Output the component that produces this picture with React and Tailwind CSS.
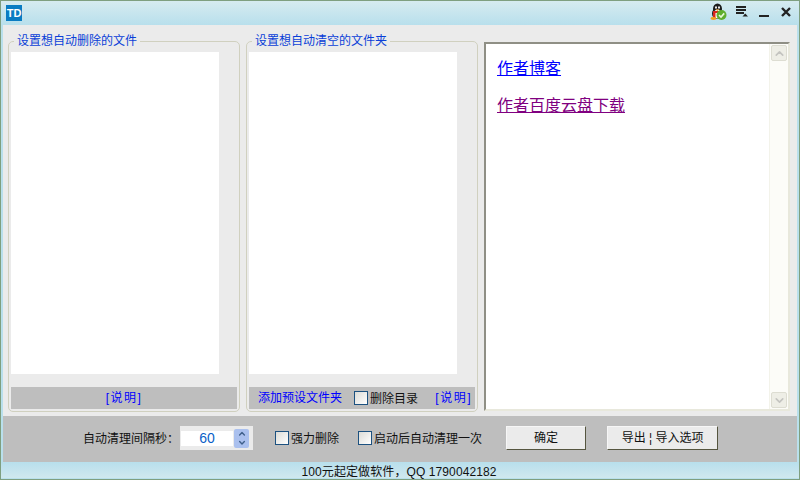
import { ChevronUp, ChevronDown } from 'lucide-react';

const font = { fontFamily: '"Liberation Sans", "Noto Sans CJK SC", sans-serif' };

function Penguin() {
  return (
    <svg width="17" height="17" viewBox="0 0 17 17">
      <ellipse cx="7.5" cy="6" rx="4.5" ry="5.5" fill="#1c1c1c" />
      <ellipse cx="7.5" cy="10.5" rx="5.5" ry="5.5" fill="#1c1c1c" />
      <ellipse cx="7.5" cy="11" rx="3.8" ry="4.6" fill="#fff" />
      <ellipse cx="6" cy="4.5" rx="0.9" ry="1.3" fill="#fff" />
      <ellipse cx="9" cy="4.5" rx="0.9" ry="1.3" fill="#fff" />
      <path d="M5.5 6.5h4L7.5 8z" fill="#f0a020" />
      <rect x="3" y="8" width="9" height="2" fill="#d8261c" />
      <rect x="3" y="10" width="2.5" height="5" fill="#d8261c" />
      <ellipse cx="3.5" cy="15.5" rx="3" ry="1.4" fill="#f0a020" />
      <circle cx="11.5" cy="12" r="5" fill="#5fae2e" />
      <path d="M9 12l2 2 3.2-3.6" fill="none" stroke="#e8f8d8" strokeWidth="1.6" />
    </svg>
  );
}

function MenuIcon() {
  return (
    <svg width="12" height="11" viewBox="0 0 12 11">
      <path d="M0 1h10M0 4h10M0 7h8" stroke="#222" strokeWidth="1.8" />
      <path d="M6.5 10.5h5.5L9.2 7.5z" fill="#222" />
    </svg>
  );
}

function MinimizeIcon() {
  return (
    <svg width="10" height="10" viewBox="0 0 10 10">
      <rect x="0" y="8" width="10" height="2" fill="#222" />
    </svg>
  );
}

function CloseIcon() {
  return (
    <svg width="10" height="10" viewBox="0 0 10 10">
      <path d="M1 1l8 8M9 1l-8 8" stroke="#222" strokeWidth="2.4" />
    </svg>
  );
}

function CheckBox({ label, className = '' }) {
  return (
    <label className={`flex items-center gap-[2px] ${className}`}>
      <span className="h-[14px] w-[14px] border border-[#1c5180] bg-gradient-to-br from-[#dcdcd7] to-white" />
      <span className="pt-[2px] text-[12px] leading-none text-[#111]">{label}</span>
    </label>
  );
}

function GroupBox({ title, children, className = '' }) {
  return (
    <fieldset className={`flex h-[378px] flex-col rounded-[5px] border border-[#d0d0bf] px-[2px] pb-[1px] ${className}`}>
      <legend className="ml-[3px] px-[3px] text-[12px] leading-[14px] text-[#0a3fd8]">{title}</legend>
      <div className="mt-[4px] h-[322px] w-[208px] shrink-0 bg-white" />
      <div className="mt-[13px] flex h-[22px] w-[226px] shrink-0 items-center bg-[#bebebe] text-[12px] text-[#0000ff]">
        {children}
      </div>
    </fieldset>
  );
}

function PushButton({ label, className = '' }) {
  return (
    <button
      type="button"
      className={`h-[24px] border border-t-[#f6f6f6] border-l-[#f6f6f6] border-r-[#55553f] border-b-[#55553f] bg-[#ebebeb] text-[12px] text-[#111] ${className}`}
    >
      {label}
    </button>
  );
}

export default function App() {
  return (
    <div className="flex h-[480px] w-[800px] flex-col overflow-hidden border border-[#7f9f80] bg-[#b9e0ec]" style={font}>
      {/* title bar */}
      <div className="flex h-[24px] shrink-0 items-center bg-gradient-to-b from-[#d6ebf0] to-[#b8dfec] pl-[5px]">
        <div className="flex h-[16px] w-[16px] items-center justify-center bg-[#0a7cc2] text-[11px] font-bold leading-none text-white">
          TD
        </div>
        <div className="ml-auto flex items-center pb-[3px]">
          <Penguin />
          <span className="ml-[9px] flex w-[12px]"><MenuIcon /></span>
          <span className="ml-[11px] flex"><MinimizeIcon /></span>
          <span className="ml-[12px] mr-[8px] flex"><CloseIcon /></span>
        </div>
      </div>

      {/* main area */}
      <div className="mx-[2px] flex h-[391px] shrink-0 items-start bg-[#ebebeb] pl-[5px]">
        <GroupBox title="设置想自动删除的文件" className="mt-[9px] w-[232px]">
          <span className="w-full text-center tracking-[1.5px]">[说明]</span>
        </GroupBox>
        <GroupBox title="设置想自动清空的文件夹" className="ml-[6px] mt-[9px] w-[232px]">
          <span className="ml-[9px]">添加预设文件夹</span>
          <CheckBox label="删除目录" className="ml-[12px]" />
          <span className="ml-auto mr-[3px] tracking-[1.5px]">[说明]</span>
        </GroupBox>

        <div className="relative ml-[6px] mt-[17px] h-[369px] w-[306px] border-2 border-b-[#e8e8dc] border-l-[#8f8f85] border-r-[#e8e8dc] border-t-[#8f8f85] bg-white pl-[11px] pt-[14px] text-[16px] leading-[22px]">
          <a className="block w-fit text-[#0000ff] underline">作者博客</a>
          <a className="mt-[15px] block w-fit text-[#800080] underline">作者百度云盘下载</a>
          <div className="absolute right-0 top-0 flex h-full w-[19px] flex-col justify-between border-l border-[#f3f3ea] bg-[#fcfcf8] p-[1px]">
            <span className="flex h-[16px] items-center justify-center rounded-[2px] border border-[#ddddd2] bg-[#eeeee6]">
              <ChevronUp size={13} strokeWidth={3} className="text-[#c4c4c0]" />
            </span>
            <span className="flex h-[16px] items-center justify-center rounded-[2px] border border-[#ddddd2] bg-[#eeeee6]">
              <ChevronDown size={13} strokeWidth={3} className="text-[#c4c4c0]" />
            </span>
          </div>
        </div>
      </div>

      {/* options bar */}
      <div className="mx-[2px] flex h-[46px] shrink-0 items-center bg-[#bebebe] pb-[2px] pl-[80px] text-[12px] text-[#111]">
        <span className="pt-[2px]">自动清理间隔秒：</span>
        <div className="ml-[1px] flex h-[24px] w-[73px] items-center bg-[#ebebeb] pl-[1px]">
          <span className="flex h-[15px] w-[52px] items-center justify-center bg-white text-[14px] text-[#0a5fc8]">60</span>
          <span className="ml-[1px] flex h-[19px] w-[15px] flex-col items-center justify-center rounded-[2px] bg-[#aac0ee] text-[#3f5f8a]">
            <ChevronUp size={10} strokeWidth={3.5} />
            <ChevronDown size={10} strokeWidth={3.5} />
          </span>
        </div>
        <CheckBox label="强力删除" className="ml-[22px]" />
        <CheckBox label="启动后自动清理一次" className="ml-[19px]" />
        <PushButton label="确定" className="ml-[24px] w-[80px]" />
        <PushButton label="导出 ¦ 导入选项" className="ml-[21px] w-[111px]" />
      </div>

      {/* status bar */}
      <div className="flex h-[16px] shrink-0 items-center justify-center bg-gradient-to-b from-[#b8dfec] to-[#d0e8ef] pr-[2px] pt-[3px] text-[12px] leading-none tracking-[0.1px] text-[#111]">
        100元起定做软件，QQ 1790042182
      </div>
    </div>
  );
}
